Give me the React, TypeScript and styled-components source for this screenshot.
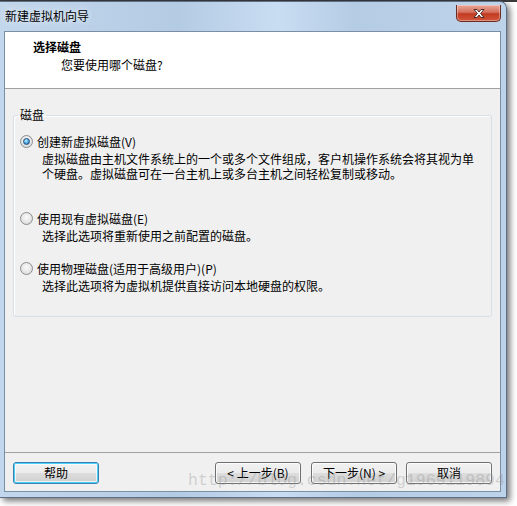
import React from "react";
import styled, { createGlobalStyle } from "styled-components";

const GlobalStyle = createGlobalStyle`
  html, body { margin: 0; padding: 0; background: #ffffff; }
  body { font-family: "Noto Sans CJK SC", "Noto Sans", sans-serif; font-size: 12px; color: #000; }
`;

const Page = styled.div`
  position: relative;
  width: 517px;
  height: 506px;
  overflow: hidden;
  background: linear-gradient(180deg, #3a3a3a 0px, #3a3a3a 2px, #ffffff 2px);
`;

const Window = styled.div`
  width: 507px;
  height: 497px;
  margin-top: 1px;
  box-sizing: border-box;
  display: flex;
  flex-direction: column;
  padding: 0 5px 5px 4px;
  border-radius: 0 7px 0 0;
  border: 1px solid #5c6f86;
  border-left: none;
  background: linear-gradient(90deg, #c3d7ec 0%, #b4cbe4 35%, #c9ddf2 55%, #b5cce5 70%, #bdd3ea 100%);
  box-shadow: 3px 3px 6px rgba(0, 0, 0, 0.55);
`;

const TitleBar = styled.div`
  height: 29px;
  display: flex;
  align-items: flex-start;
  justify-content: space-between;
  flex: none;
`;

const TitleText = styled.div`
  margin-top: 6px;
  margin-left: 1px;
  line-height: 16px;
  color: #000;
  text-shadow: 0 0 6px rgba(255, 255, 255, 0.9);
`;

const CloseButton = styled.div`
  width: 45px;
  height: 17px;
  margin-top: 3px;
  margin-right: 0px;
  box-sizing: border-box;
  border: 1px solid #6b2c23;
  border-top: none;
  border-radius: 0 0 5px 5px;
  background: linear-gradient(180deg, #e9a899 0%, #d5715e 45%, #c13b22 55%, #d2563b 100%);
  display: flex;
  align-items: center;
  justify-content: center;
  box-shadow: inset 0 0 0 1px rgba(255, 255, 255, 0.35);
`;

const Client = styled.div`
  flex: 1;
  display: flex;
  flex-direction: column;
  border: 1px solid #7b8ea4;
  background: #f0f0f0;
`;

const Header = styled.div`
  height: 56px;
  flex: none;
  background: #ffffff;
  border-bottom: 1px solid #a0a0a0;
  padding: 7px 0 0 28px;
  box-sizing: border-box;
  height: 57px;
`;

const HeaderTitle = styled.div`
  font-weight: bold;
  line-height: 16px;
`;

const HeaderSub = styled.div`
  margin: 2px 0 0 28px;
  line-height: 16px;
`;

const Body = styled.div`
  flex: 1;
  padding: 18px 8px 0 8px;
`;

const GroupBox = styled.fieldset`
  margin: 0;
  padding: 9px 6px 23px 6px;
  border: 1px solid #d5dfe5;
  border-radius: 3px;
  box-shadow: inset 1px 1px 0 #ffffff;
`;

const Legend = styled.legend`
  padding: 0 2px;
  margin-left: -2px;
  line-height: 16px;
`;

const OptionList = styled.div`
  display: flex;
  flex-direction: column;
  gap: 16px;
`;

const Option = styled.div``;

const OptionLabel = styled.div`
  display: flex;
  align-items: center;
  height: 18px;
  gap: 4px;
`;

const Radio = styled.span<{ $checked?: boolean }>`
  width: 13px;
  height: 13px;
  box-sizing: border-box;
  border-radius: 50%;
  border: 1px solid #8a8d90;
  background: radial-gradient(circle at 50% 40%, #fbfbfb 0%, #e6e6e6 55%, #cfd1d3 100%);
  display: flex;
  align-items: center;
  justify-content: center;
  flex: none;
  &::after {
    content: "";
    display: ${(p) => (p.$checked ? "block" : "none")};
    width: 5px;
    height: 5px;
    border-radius: 50%;
    border: 1px solid #214d7a;
    background: radial-gradient(circle at 40% 35%, #c4ecff 0%, #5bb2ec 45%, #1a5b9e 100%);
  }
`;

const Description = styled.div<{ $minLines?: number }>`
  margin-left: 22px;
  line-height: 15px;
  padding-top: 1px;
  white-space: nowrap;
  min-height: ${(p) => (p.$minLines ? p.$minLines * 15 - 3 : 15)}px;
`;

const Footer = styled.div`
  flex: none;
  height: 39px;
  box-sizing: border-box;
  border-top: 1px solid #a0a0a0;
  display: flex;
  align-items: flex-start;
  padding: 9px 8px 0 8px;
`;

const Spacer = styled.div`
  flex: 1;
`;

const Button = styled.button<{ $default?: boolean; $gap?: number }>`
  width: 86px;
  height: 22px;
  margin-left: ${(p) => p.$gap ?? 0}px;
  padding: 0;
  font-family: "Noto Sans CJK SC", "Noto Sans", sans-serif;
  font-size: 12px;
  color: #000;
  border-radius: 3px;
  border: 1px solid ${(p) => (p.$default ? "#3c7fb1" : "#707070")};
  background: linear-gradient(180deg, #f2f2f2 0%, #ebebeb 50%, #dddddd 51%, #cfcfcf 100%);
  box-shadow: ${(p) =>
    p.$default ? "inset 0 0 0 1px #48d2fb, inset 0 0 0 2px rgba(255,255,255,0.6)" : "inset 0 0 0 1px rgba(255,255,255,0.8)"};
  line-height: 18px;
`;

const Watermark = styled.div`
  position: absolute;
  left: 188px;
  top: 470px;
  font-family: "Liberation Mono", "DejaVu Sans Mono", monospace;
  font-size: 16.5px;
  line-height: 22px;
  color: rgba(150, 150, 150, 0.38);
  white-space: nowrap;
  pointer-events: none;
`;

const CloseIcon = () => (
  <svg width="14" height="11" viewBox="0 0 14 11">
    <path
      d="M2 1.5 L5 1.5 L7 4 L9 1.5 L12 1.5 L8.6 5.5 L12 9.5 L9 9.5 L7 7 L5 9.5 L2 9.5 L5.4 5.5 Z"
      fill="#ffffff"
      stroke="#4a2a26"
      strokeWidth="1"
      strokeLinejoin="round"
    />
  </svg>
);

const options = [
  {
    label: "创建新虚拟磁盘(V)",
    lines: ["虚拟磁盘由主机文件系统上的一个或多个文件组成，客户机操作系统会将其视为单", "个硬盘。虚拟磁盘可在一台主机上或多台主机之间轻松复制或移动。"],
    checked: true,
    minLines: 3,
  },
  {
    label: "使用现有虚拟磁盘(E)",
    lines: ["选择此选项将重新使用之前配置的磁盘。"],
    checked: false,
    minLines: 1,
  },
  {
    label: "使用物理磁盘(适用于高级用户)(P)",
    lines: ["选择此选项将为虚拟机提供直接访问本地硬盘的权限。"],
    checked: false,
    minLines: 1,
  },
];

export default function App() {
  return (
    <Page>
      <GlobalStyle />
      <Window>
        <TitleBar>
          <TitleText>新建虚拟机向导</TitleText>
          <CloseButton>
            <CloseIcon />
          </CloseButton>
        </TitleBar>
        <Client>
          <Header>
            <HeaderTitle>选择磁盘</HeaderTitle>
            <HeaderSub>您要使用哪个磁盘?</HeaderSub>
          </Header>
          <Body>
            <GroupBox>
              <Legend>磁盘</Legend>
              <OptionList>
                {options.map((o) => (
                  <Option key={o.label}>
                    <OptionLabel>
                      <Radio $checked={o.checked} />
                      <span>{o.label}</span>
                    </OptionLabel>
                    <Description $minLines={o.minLines}>
                      {o.lines.map((l, i) => (
                        <div key={i}>{l}</div>
                      ))}
                    </Description>
                  </Option>
                ))}
              </OptionList>
            </GroupBox>
          </Body>
          <Footer>
            <Button $default>帮助</Button>
            <Spacer />
            <Button>&lt; 上一步(B)</Button>
            <Button $gap={10}>下一步(N) &gt;</Button>
            <Button $gap={9}>取消</Button>
          </Footer>
        </Client>
      </Window>
      <Watermark>http://blog.csdn.net/g1969119894</Watermark>
    </Page>
  );
}
